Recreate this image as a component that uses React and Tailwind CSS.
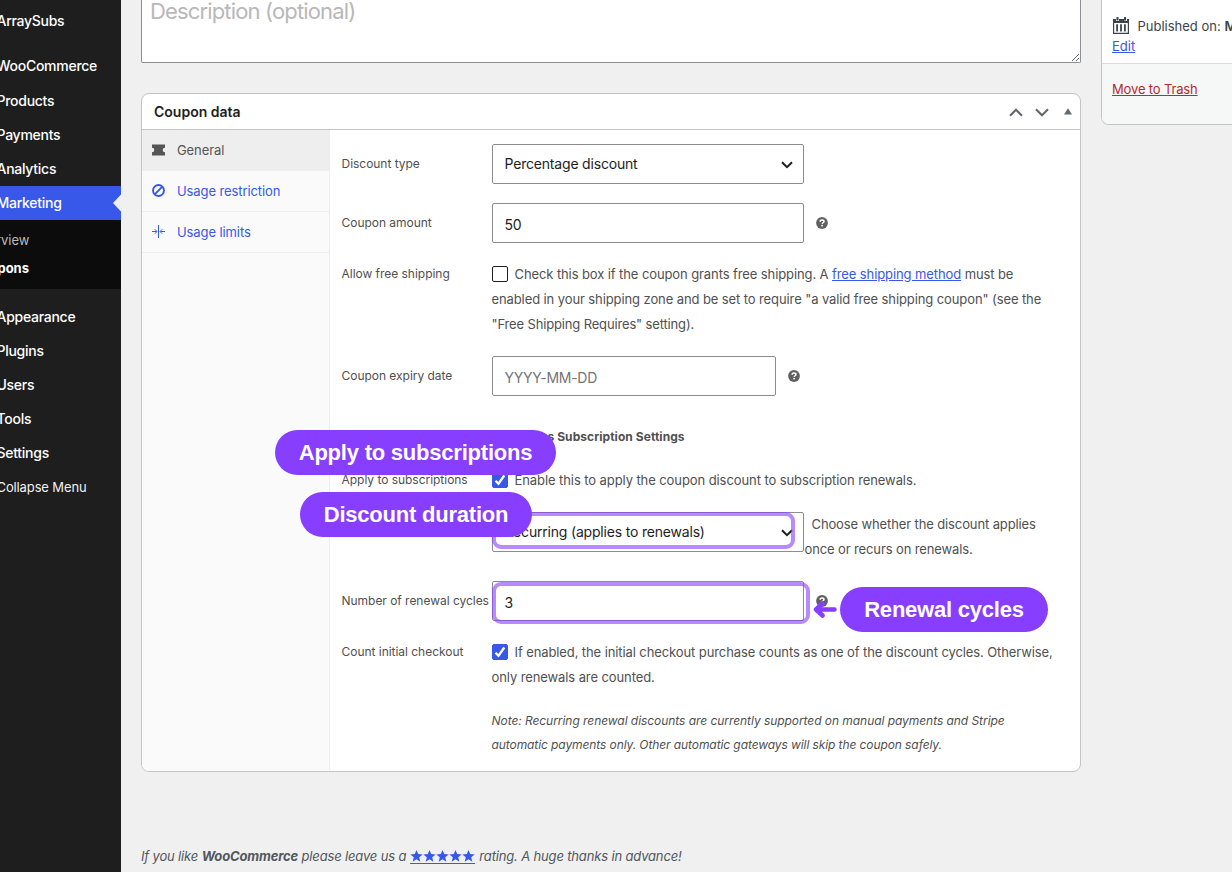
import React from 'react'

const menuTop = ['Products', 'Payments', 'Analytics']
const menuBottom = ['Appearance', 'Plugins', 'Users', 'Tools', 'Settings']

const MenuItem = ({ children }) => (
  <a className="-ml-[3.5px] flex h-[34px] items-center whitespace-nowrap pb-px text-[14px] font-medium tracking-[-0.27px] text-white">
    {children}
  </a>
)

const Sidebar = () => (
  <nav className="w-[121px] shrink-0 overflow-hidden bg-[#1e1e1e] pt-1">
    <MenuItem>ArraySubs</MenuItem>
    <div className="mt-[11px]">
      <MenuItem>WooCommerce</MenuItem>
    </div>
    <div className="mt-px">
      {menuTop.map((item) => (
        <MenuItem key={item}>{item}</MenuItem>
      ))}
    </div>
    <div className="flex items-center justify-between bg-[#3858e9]">
      <MenuItem>Marketing</MenuItem>
      <svg width="8" height="18" viewBox="0 0 8 18" fill="#f0f0f0">
        <path d="M8 0.5v17L0 9z" />
      </svg>
    </div>
    <div className="h-[69px] bg-[#0c0c0c] pt-[7px] text-[13px]">
      <div className="flex h-7 w-[29.5px] items-center justify-end whitespace-nowrap text-[#b9b9b9]">Overview</div>
      <div className="flex h-7 w-[29px] items-center justify-end whitespace-nowrap font-bold text-white">Coupons</div>
    </div>
    <div className="mt-[11px]">
      {menuBottom.map((item) => (
        <MenuItem key={item}>{item}</MenuItem>
      ))}
      <a className="-ml-[3.5px] flex h-[34px] items-center whitespace-nowrap pt-px text-[13px] tracking-[-0.12px] text-[#f0f0f0]">
        Collapse Menu
      </a>
    </div>
  </nav>
)

const HelpTip = () => (
  <span className="ml-3 mt-3.5 shrink-0">
    <svg width="12" height="12" viewBox="0 0 12 12">
      <circle cx="6" cy="6" r="5.9" fill="#606060" />
      <path d="M4.100 4.700C4.100 3.500 4.900 2.900 6 2.900s2 .6 2 1.600c0 1.200-1.800 1.300-1.800 2.500" fill="none" stroke="#fff" strokeWidth="1.500" />
      <rect x="5.300" y="7.900" width="1.600" height="1.500" fill="#fff" />
    </svg>
  </span>
)

const Select = ({ children }) => (
  <div className="flex h-10 w-[312px] shrink-0 items-center justify-between rounded-[2px] border border-[#8c8c8c] bg-white pl-3 pr-[10px] text-[14px] tracking-[-0.19px] text-[#1e1e1e]">
    <span className="pb-px">{children}</span>
    <svg width="12" height="8" viewBox="0 0 12 8" fill="none" stroke="#1e1e1e" strokeWidth="2" className="mt-0.5">
      <path d="M1 1.200l5 5 5-5" />
    </svg>
  </div>
)

const Input = ({ children, className = 'w-[312px] text-[#1e1e1e]' }) => (
  <div className={`flex h-10 shrink-0 items-center rounded-[2px] border border-[#8c8c8c] bg-white pl-3 pt-0.5 text-[14px] tracking-[-0.28px] ${className}`}>
    {children}
  </div>
)

const Checkbox = ({ checked }) => (
  <span
    className={`mr-[7px] mt-1 inline-flex h-4 w-4 items-center justify-center rounded-[2px] border align-top ${
      checked ? 'border-[#3858e9] bg-[#3858e9]' : 'border-[#1e1e1e] bg-white'
    }`}
  >
    {checked && (
      <svg width="12" height="12" viewBox="0 0 12 12" fill="none" stroke="#fff" strokeWidth="2.300">
        <path d="M1.500 6.700l3 3L10.300 1.500" />
      </svg>
    )}
  </span>
)

const Row = ({ label, className = '', labelTop = '', children }) => (
  <div className={`flex items-start ${className}`}>
    <div className={`w-[150px] shrink-0 whitespace-nowrap text-[12px] leading-6 tracking-[-0.03px] ${labelTop}`}>{label}</div>
    {children}
  </div>
)

const tabs = [
  {
    name: 'General',
    active: true,
    icon: (
      <svg width="13" height="12" viewBox="0 0 13 12" fill="#555">
        <path d="M0 .5h13v3.200a2.300 2.300 0 0 0 0 4.600v3.200H0V8.300a2.300 2.300 0 0 0 0-4.600z" />
      </svg>
    ),
  },
  {
    name: 'Usage restriction',
    icon: (
      <svg width="13" height="13" viewBox="0 0 13 13" fill="none" stroke="#3858e9" strokeWidth="1.900">
        <circle cx="6.500" cy="6.500" r="5.500" />
        <path d="M2.700 10.300l7.600-7.600" />
      </svg>
    ),
  },
  {
    name: 'Usage limits',
    icon: (
      <svg width="13" height="13" viewBox="0 0 13 13" fill="none" stroke="#3858e9" strokeWidth="1">
        <path d="M6.500 0v13M0 6.500h4.700M13 6.500H8.300M2.800 4.300L5 6.500 2.800 8.700M10.200 4.300L8 6.500l2.200 2.200" />
      </svg>
    ),
  },
]

const CouponPanel = () => (
  <section className="mt-[30px] h-[679px] overflow-hidden rounded-lg border border-[#c3c4c7] bg-white">
    <header className="flex h-9 items-center justify-between border-b border-[#c3c4c7] pl-3 pr-[8.5px]">
      <h2 className="text-[14px] font-semibold text-[#1e1e1e]">Coupon data</h2>
      <div className="flex items-center pt-px text-[#646970]">
        <svg width="14" height="9" viewBox="0 0 14 9" fill="none" stroke="currentColor" strokeWidth="2.100">
          <path d="M1 7.800l6-6 6 6" />
        </svg>
        <svg width="14" height="9" viewBox="0 0 14 9" fill="none" stroke="currentColor" strokeWidth="2.100" className="ml-3">
          <path d="M1 1.200l6 6 6-6" />
        </svg>
        <svg width="8" height="7" viewBox="0 0 8 7" fill="currentColor" className="mb-0.5 ml-[15px]">
          <path d="M4 .3L8 6.500H0z" />
        </svg>
      </div>
    </header>

    <div className="flex h-[641px]">
      <ul className="w-[188px] shrink-0 border-r border-[#eee] bg-[#fafafa] text-[13px] tracking-[-0.1px]">
        {tabs.map((tab) => (
          <li
            key={tab.name}
            className={`flex h-[41px] items-center gap-3 border-b border-[#eee] pl-2.5 ${
              tab.active ? 'bg-[#eee] text-[#555]' : 'text-[#3858e9]'
            }`}
          >
            <span className="mb-px">{tab.icon}</span>
            <span className="pt-0.5">{tab.name}</span>
          </li>
        ))}
      </ul>

      <div className="flex-1 pl-[11.5px] pt-3.5 text-[13px] tracking-[-0.1px] text-[#505050]">
        <Row label="Discount type" labelTop="pt-2">
          <Select>Percentage discount</Select>
        </Row>

        <Row label="Coupon amount" className="mt-[19px]" labelTop="pt-2">
          <Input>50</Input>
          <HelpTip />
        </Row>

        <Row label="Allow free shipping" className="mt-[19px]">
          <p className="whitespace-nowrap leading-[25px]">
            <Checkbox />
            Check this box if the coupon grants free shipping. A{' '}
            <a className="text-[#3858e9] underline">free shipping method</a> must be
            <br />
            enabled in your shipping zone and be set to require "a valid free shipping coupon" (see the
            <br />
            <span className="tracking-[-0.15px]">"Free Shipping Requires" setting).</span>
          </p>
        </Row>

        <Row label="Coupon expiry date" className="mt-[19px]" labelTop="pt-2">
          <Input className="w-[284px] text-[#757575]">YYYY-MM-DD</Input>
          <HelpTip />
        </Row>

        <h4 className="ml-[150px] mt-[29px] text-[12px] font-bold leading-6 tracking-[0.06px]">ArraySubs Subscription Settings</h4>

        <Row label="Apply to subscriptions" className="mt-[19px]">
          <p className="whitespace-nowrap leading-[25px] tracking-[-0.085px]">
            <Checkbox checked />
            Enable this to apply the coupon discount to subscription renewals.
          </p>
        </Row>

        <Row className="mt-[19px]">
          <Select>Recurring (applies to renewals)</Select>
          <p className="ml-px whitespace-nowrap leading-[25px] tracking-[-0.12px]">
            <span className="ml-[7px]">Choose whether the discount applies</span>
            <br />
            once or recurs on renewals.
          </p>
        </Row>

        <Row label="Number of renewal cycles" className="mt-[19px]" labelTop="pt-2">
          <Input>3</Input>
          <HelpTip />
        </Row>

        <Row label="Count initial checkout" className="mt-[19px]">
          <p className="whitespace-nowrap leading-[25px]">
            <Checkbox checked />
            If enabled, the initial checkout purchase counts as one of the discount cycles. Otherwise,
            <br />
            only renewals are counted.
          </p>
        </Row>

        <p className="ml-[150px] mt-[19px] whitespace-nowrap text-[12px] italic leading-6 tracking-[-0.055px]">
          Note: Recurring renewal discounts are currently supported on manual payments and Stripe
          <br />
          <span className="tracking-[-0.09px]">automatic payments only. Other automatic gateways will skip the coupon safely.</span>
        </p>
      </div>
    </div>
  </section>
)

const PublishBox = () => (
  <aside className="ml-5 h-[125px] w-[281px] shrink-0 overflow-hidden rounded-b-lg border border-t-0 border-[#c3c4c7] bg-white text-[13px] text-[#3c434a]">
    <div className="h-16 border-b border-[#dcdcde] pl-2.5 pt-4 leading-5">
      <div className="-mt-px flex items-center whitespace-nowrap">
        <svg width="17" height="17" viewBox="0 0 17 17" fill="#3c434a" className="ml-px">
          <path d="M0 2h3v2h3V2h5v2h3V2h2v15H0zM1.200 6v9.800h13.600V6z" fillRule="evenodd" />
          <path d="M3.500 0h2v3.500h-2zM11 0h2v3.500h-2zM3.200 7.300h1.800v7.200H3.200zM7.100 7.300h1.800v7.200H7.100zM11 7.300h1.800v7.200H11z" />
        </svg>
        <span className="ml-[7.5px] pt-px">
          Published on: <b className="font-semibold">Mar 3, 2026</b>
        </span>
      </div>
      <a className="text-[#3858e9] underline">Edit</a>
    </div>
    <div className="h-[61px] bg-[#f6f7f7] pl-2.5 pt-[15px] leading-5">
      <a className="tracking-[-0.15px] text-[#b32d2e] underline">Move to Trash</a>
    </div>
  </aside>
)

const Pill = ({ className, children }) => (
  <div
    className={`absolute flex h-[45px] items-center justify-center whitespace-nowrap rounded-full bg-[#873eff] font-['Liberation_Sans',Arial,sans-serif] text-[22px] font-bold tracking-[-0.22px] text-white ${className}`}
  >
    {children}
  </div>
)

// highlight rings and labels that sit on top of the form
const Callouts = () => (
  <>
    <div className="absolute left-[492px] top-[512px] h-[37px] w-[303px] rounded-[9px] border-4 border-[#873eff]/60" />
    <div className="absolute left-[492px] top-[582px] h-[42px] w-[318px] rounded-[9px] border-4 border-[#873eff]/60" />
    <Pill className="left-[275px] top-[430px] w-[281px]">Apply to subscriptions</Pill>
    <Pill className="left-[300px] top-[492px] w-[232px]">Discount duration</Pill>
    <Pill className="left-[840px] top-[587px] w-[208px]">Renewal cycles</Pill>
    <svg className="absolute left-[813px] top-[600px]" width="25" height="19" viewBox="0 0 25 19" fill="none" stroke="#873eff" strokeWidth="4.500" strokeLinecap="round" strokeLinejoin="round">
      <path d="M21.500 9.500H4M9.500 3.500L3 9.500l6.500 6" />
    </svg>
  </>
)

const App = () => {
  return (
    <div className="relative flex h-[872px] w-[1232px] overflow-hidden bg-[#f0f0f0] font-['Inter',sans-serif]">
      <Sidebar />
      <main className="ml-5 w-[940px] shrink-0">
        <div className="relative h-[63px] rounded-b-[2px] border border-t-0 border-[#8c8f94] bg-white pl-2 text-[22px] leading-[23px] tracking-[-0.85px] text-[#b8b8b8]">
          Description (optional)
          <svg className="absolute bottom-0 right-0" width="9" height="9" viewBox="0 0 9 9" stroke="#555" strokeWidth="0.900">
            <path d="M1 8L8 1M5 8l3-3" />
          </svg>
        </div>
        <CouponPanel />
        <footer className="mt-[73px] flex items-center whitespace-nowrap text-[13px] italic leading-[22px] tracking-[-0.155px] text-[#50575e]">
          <span>
            If you like <b>WooCommerce</b> please leave us a
          </span>
          <span className="mx-1 mt-px flex h-[14px] w-[65px] border-b border-[#3858e9]">
            {[0, 1, 2, 3, 4].map((n) => (
              <svg key={n} width="13" height="12" viewBox="0 0 13 12" fill="#3858e9">
                <path d="M6.500 0l1.700 4.100 4.500.3-3.500 2.900 1.100 4.400-3.800-2.400-3.800 2.400 1.100-4.400L.3 4.400l4.500-.3z" />
              </svg>
            ))}
          </span>
          <span>rating. A huge thanks in advance!</span>
        </footer>
      </main>
      <PublishBox />
      <Callouts />
    </div>
  )
}

export default App
